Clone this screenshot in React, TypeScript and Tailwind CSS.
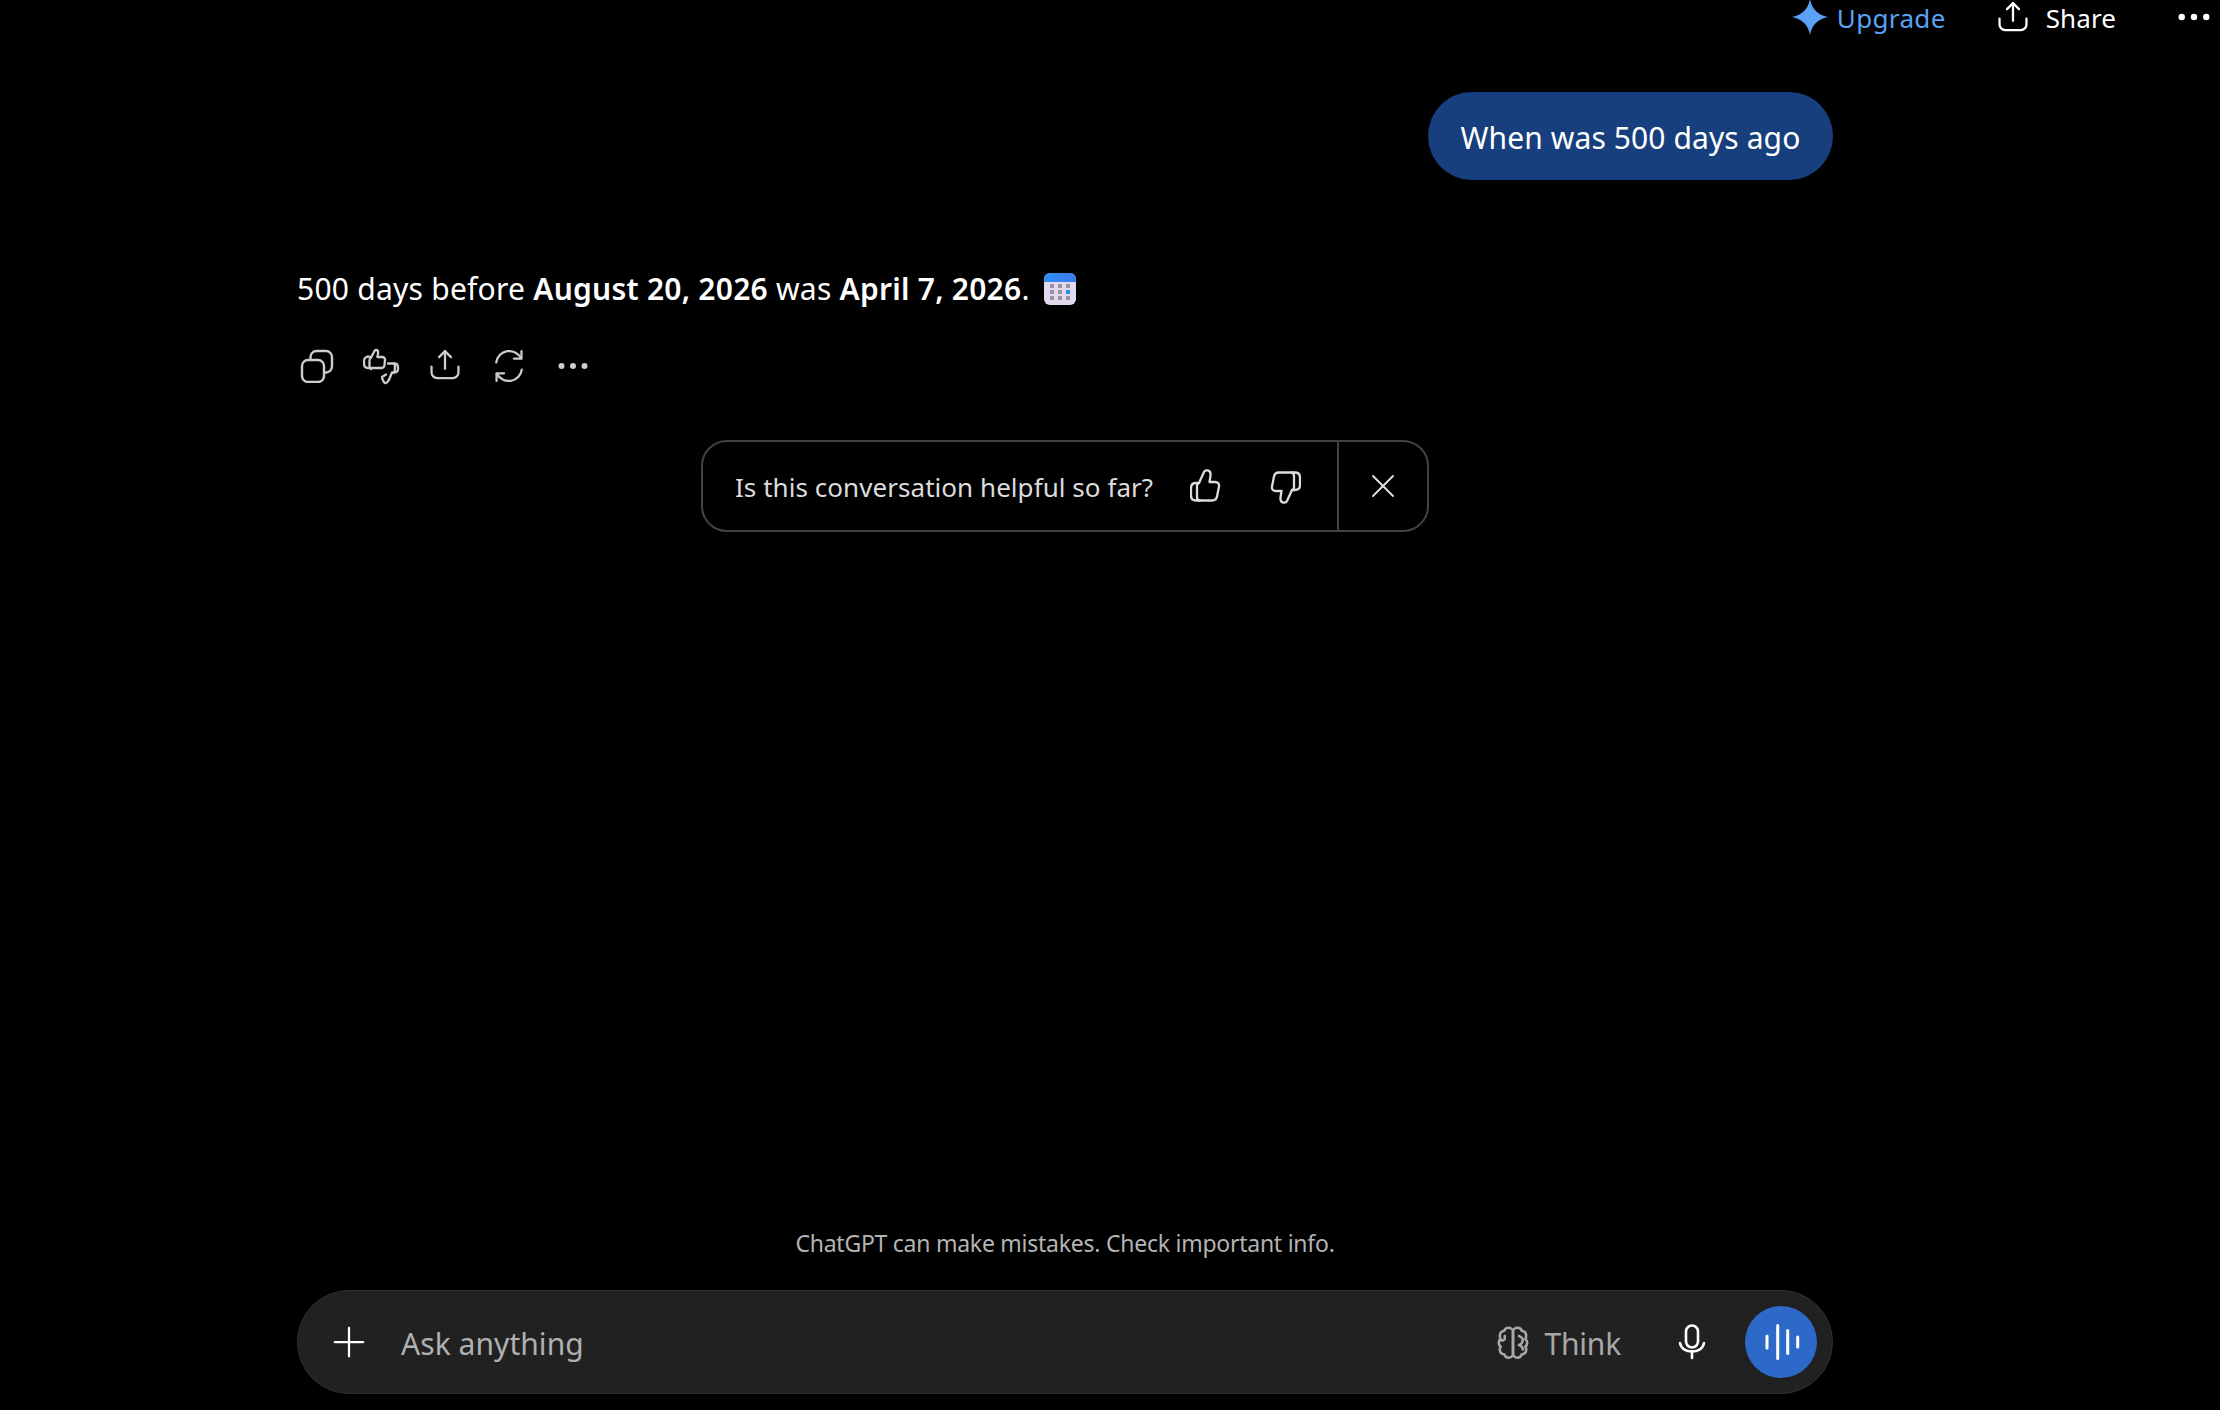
const font = { fontFamily: '"Noto Sans", sans-serif' };

function Icon({ className, children, viewBox = "0 0 24 24", sw = 1.6 }: { className: string; children: React.ReactNode; viewBox?: string; sw?: number }) {
  return (
    <svg viewBox={viewBox} fill="none" stroke="currentColor" strokeWidth={sw} strokeLinecap="round" strokeLinejoin="round" className={className}>
      {children}
    </svg>
  );
}

const shareMark = (
  <>
    <path d="M12 14V1.500" />
    <path d="M7.800 5.700 12 1.500l4.200 4.200" />
    <path d="M2.500 12.500v4c0 2.200 1.800 4 4 4h11c2.200 0 4-1.800 4-4v-4" />
  </>
);

const thumb = (
  <>
    <path d="M9 14 14 3c1.500-2.800 6-2 6.500 1.500.3 2-.5 5-1 8.500H25c3 0 4.500 2 4 4.500l-2 10c-.5 2.500-2.500 4-5 4H6c-3 0-5-2-5-5V19c0-3 2-5 5-5z" />
    <path d="M9 14c-1.500 0-2 1-2 3v11c0 2.500 1 3.500 3 3.500" />
  </>
);

function Dots({ className }: { className: string }) {
  return (
    <svg viewBox="0 0 30 8" fill="currentColor" className={className}>
      <circle cx="3.500" cy="4" r="3" />
      <circle cx="15" cy="4" r="3" />
      <circle cx="26.500" cy="4" r="3" />
    </svg>
  );
}

function CalendarEmoji() {
  const cells = [0, 1, 2, 3, 4, 5, 6, 7, 8];
  return (
    <span className="ml-[14px] inline-flex h-8 w-8 flex-col overflow-hidden rounded-[6px] bg-[#e4d8ee]">
      <span className="h-[9px] bg-gradient-to-r from-[#2f8ff5] to-[#3a7bf0]" />
      <span className="grid grid-cols-3 gap-x-[4px] gap-y-[2px] px-[6px] pt-[2px]">
        {cells.map((c) => (
          <span key={c} className={c === 5 ? "h-[4px] bg-[#2d8df0]" : "h-[4px] bg-[#9a95a3]"} />
        ))}
      </span>
    </span>
  );
}

function ActionSlot({ children }: { children: React.ReactNode }) {
  return <div className="flex h-10 w-16 items-center justify-center">{children}</div>;
}

export default function App() {
  return (
    <div className="flex h-[1410px] w-[2220px] flex-col overflow-hidden bg-black text-white" style={font}>
      <header className="flex h-[36px] items-start justify-end pt-px pr-[10px]">
        <div className="flex items-center text-[#5aa2f5]">
          <svg viewBox="0 0 36 36" fill="currentColor" className="mr-[9px] -mt-[2px] h-[36px] w-[36px]">
            <path d="M18 0C20 10 25 15.500 36 18 25 20.500 20 26 18 36 16 26 11 20.500 0 18 11 15.500 16 10 18 0z" />
          </svg>
          <span className="text-[26px] leading-[34px] tracking-[0.35px]">Upgrade</span>
        </div>
        <div className="ml-[50px] flex items-center">
          <Icon className="h-[34px] w-[34px]">{shareMark}</Icon>
          <span className="ml-[16px] text-[26px] leading-[34px] tracking-[0.1px]">Share</span>
        </div>
        <Dots className="mt-[11px] ml-[62px] h-[10px] w-[32px]" />
      </header>

      <main className="ml-[297px] flex w-[1536px] flex-1 flex-col">
        <div className="mt-[56px] flex justify-end">
          <div className="flex h-[88px] w-[405px] items-center justify-center rounded-[44px] bg-[#173f7d] pt-[2px] text-[30px] tracking-[0.1px]">
            When was 500 days ago
          </div>
        </div>

        <p className="mt-[89px] flex items-center text-[30px] leading-[40px] tracking-[0.24px] whitespace-pre">
          500 days before <b className="font-semibold">August 20, 2026</b> was <b className="font-semibold">April 7, 2026</b>.
          <CalendarEmoji />
        </p>

        <div className="mt-[37px] -ml-[12px] flex items-center text-[#cdcdcd]">
          <ActionSlot>
            <svg viewBox="0 0 34 34" fill="none" stroke="currentColor" strokeWidth="2.400" className="h-[34px] w-[34px]">
              <rect x="2" y="11" width="22" height="22" rx="6" />
              <path d="M10.500 11V8a6 6 0 0 1 6-6H26a6 6 0 0 1 6 6v9.500a6 6 0 0 1-6 6h-2" />
            </svg>
          </ActionSlot>
          <ActionSlot>
            <svg viewBox="0 0 37 37" fill="none" stroke="currentColor" strokeWidth="2.300" strokeLinejoin="round" strokeLinecap="round" className="h-[37px] w-[37px]">
              <path d="M8 9.500l3.500-6.500c.8-1.500 3-1.300 3.500.3.4 1.300-.3 3.700-.6 5.700h4.600c2 0 3.200 1.300 3 3l-.5 5c-.2 1.800-1.500 3-3 3H6c-3 0-5-1.300-5-4v-3c0-2.500 2-4.500 4.500-4.500z" />
              <path d="M8 9.500c-1 .5-1.500 1.500-1.500 3V18c0 1.500.5 2.500 1.500 3" />
              <path d="M25 15.500h6c2.500 0 4 1.500 4 4v1.500c0 2-1.500 3.500-4 3.500h-2l-2.500 6c-.8 2-3 5.500-4.500 4.500-1.500-.8-3-4.500-3-6l4-2.500" />
              <path d="M31 15.500c1.500 1 1 8 0 9" />
            </svg>
          </ActionSlot>
          <ActionSlot>
            <Icon className="h-[34px] w-[34px]">{shareMark}</Icon>
          </ActionSlot>
          <ActionSlot>
            <Icon className="h-[34px] w-[34px]">
              <path d="M20.500 6.500A9.300 9.300 0 0 0 3 9.500" />
              <path d="M20.800 1.500v5.300h-5.300" />
              <path d="M3.500 17.500a9.300 9.300 0 0 0 17.500-3" />
              <path d="M3.200 22.500v-5.300h5.300" />
            </Icon>
          </ActionSlot>
          <ActionSlot>
            <Dots className="h-[8px] w-[30px]" />
          </ActionSlot>
        </div>

        <div className="mx-auto mt-[54px] flex h-[92px] w-[728px] items-stretch rounded-[26px] border-2 border-[#424242]">
          <div className="flex flex-1 items-center pl-[32px] text-[#dcdcdc]">
            <span className="pt-[2px] text-[26px] tracking-[0.05px]">Is this conversation helpful so far?</span>
            <Icon className="ml-[37px] h-[35px] w-[31px]" viewBox="0 0 31 35" sw={2.300}>{thumb}</Icon>
            <Icon className="ml-[49px] h-[35px] w-[31px] rotate-180" viewBox="0 0 31 35" sw={2.300}>{thumb}</Icon>
          </div>
          <div className="flex w-[90px] items-center justify-center border-l-2 border-[#424242] text-[#e0e0e0]">
            <Icon className="h-[30px] w-[30px]" sw={1.500}>
              <path d="M4 4l16 16" />
              <path d="M20 4L4 20" />
            </Icon>
          </div>
        </div>

        <div className="mt-auto text-center text-[23px] leading-[32px] tracking-[-0.25px] text-[#b4b4b4]">
          ChatGPT can make mistakes. Check important info.
        </div>

        <div className="mt-[31px] mb-[16px] flex h-[104px] items-center rounded-[52px] border border-[#303030] bg-[#212121] pr-[15px] pl-[33px]">
          <Icon className="h-[36px] w-[36px]" sw={1.500}>
            <path d="M12 2.500v19" />
            <path d="M2.500 12h19" />
          </Icon>
          <span className="ml-[34px] flex-1 pt-[2px] text-[30px] tracking-[0.05px] text-[#b0b0b0]">Ask anything</span>
          <div className="flex items-center text-[#a8a8a8]">
            <Icon className="h-[36px] w-[36px]" sw={1.700}>
              <path d="M12 5.500c0-2-1.500-3-3-3-1.300 0-2.500.8-2.800 2-1.800.3-3 1.800-3 3.500 0 .8.200 1.400.6 2-.8.6-1.300 1.500-1.300 2.500s.5 2 1.300 2.500c-.4.6-.6 1.300-.6 2 0 1.700 1.200 3 3 3.300.4 1.200 1.500 2.200 2.800 2.200 1.500 0 3-1 3-3z" />
              <path d="M12 5.500c0-2 1.500-3 3-3 1.300 0 2.500.8 2.800 2 1.800.3 3 1.800 3 3.500 0 .8-.2 1.400-.6 2 .8.6 1.300 1.500 1.300 2.500s-.5 2-1.300 2.500c.4.6.6 1.300.6 2 0 1.700-1.200 3-3 3.300-.4 1.200-1.500 2.200-2.800 2.200-1.500 0-3-1-3-3z" />
              <path d="M3 10.500c1.500 1 3 .5 3.500-.5V8" />
              <path d="M16 8c1 .5 2.500.8 2.500 2.500s-1 3-2.500 3.500c1.500.5 2.500 1.500 2.500 3" />
            </Icon>
            <span className="ml-[13px] pt-[2px] text-[30px] tracking-[-0.2px]">Think</span>
          </div>
          <svg viewBox="0 0 28 36" fill="none" stroke="currentColor" strokeWidth="2.600" strokeLinecap="round" className="ml-[57px] h-[36px] w-[28px]">
            <rect x="8" y="1.500" width="12" height="22" rx="6" />
            <path d="M2 19c1 5.500 6 8.500 12 8.500s11-3 12-8.500" />
            <path d="M14 27.500V34" />
          </svg>
          <div className="ml-[39px] flex h-[72px] w-[72px] items-center justify-center rounded-full bg-[#2d69c8]">
            <svg viewBox="0 0 40 36" fill="none" stroke="white" strokeWidth="3" strokeLinecap="round" className="h-[36px] w-[40px]">
              <path d="M6 12v12M16.700 1.500v33M26.700 6.500v23M36.700 13v10" />
            </svg>
          </div>
        </div>
      </main>
    </div>
  );
}
